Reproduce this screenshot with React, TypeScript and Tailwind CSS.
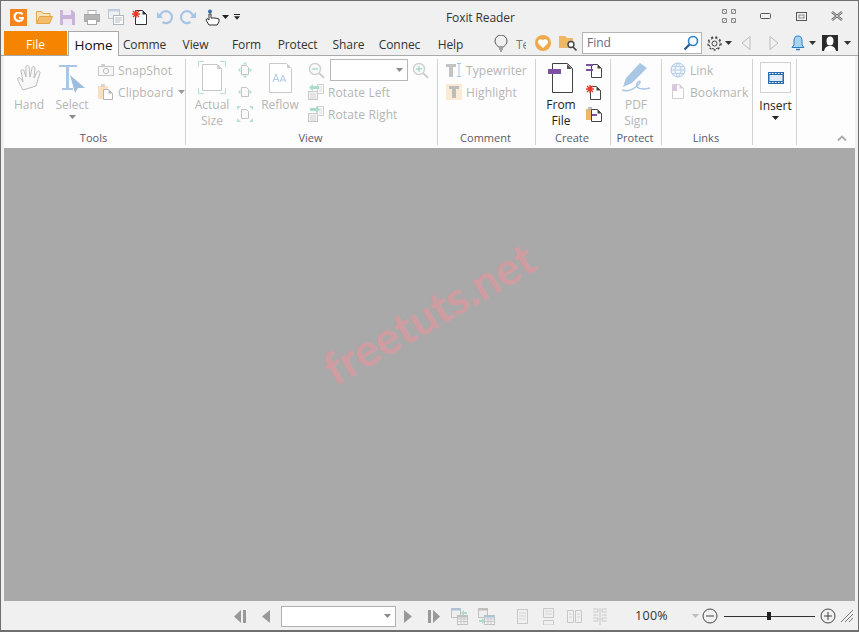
import type { ReactNode } from "react";

const Ic = ({ w = 16, h = 16, children }: { w?: number; h?: number; children: ReactNode }) => (
  <svg width={w} height={h} viewBox={`0 0 ${w} ${h}`} fill="none" className="shrink-0 block">
    {children}
  </svg>
);

const Caret = ({ className = "" }: { className?: string }) => (
  <svg width="7" height="4" viewBox="0 0 7 4" className={`shrink-0 block ${className}`}>
    <path d="M0 0h7L3.5 4z" fill="currentColor" />
  </svg>
);

const Page = ({ x = 0, y = 0, w = 11, h = 14, c = "#555" }: { x?: number; y?: number; w?: number; h?: number; c?: string }) => (
  <>
    <path d={`M${x + 0.5} ${y + 0.5}h${w - 5}l4 4v${h - 5}h-${w - 1}z`} stroke={c} fill="#fff" />
    <path d={`M${x + w - 4.5} ${y + 0.5}l4 4h-4z`} fill={c} />
  </>
);

function BigButton({ icon, label, width, caret }: { icon: ReactNode; label: ReactNode; width: number; caret?: boolean }) {
  return (
    <div className="flex flex-col items-center shrink-0" style={{ width }}>
      <div className="h-[37px] shrink-0 flex items-center justify-center">{icon}</div>
      <div className="text-center leading-[16px] mt-[1px] shrink-0">{label}</div>
      {caret && <Caret className="mt-[2px] text-[#8a8a8a]" />}
    </div>
  );
}

function SmallRow({ icon, label, className = "" }: { icon: ReactNode; label?: string; className?: string }) {
  return (
    <div className={`h-[22px] flex items-center ${className}`}>
      <div className="w-[16px] flex justify-center shrink-0">{icon}</div>
      {label && <span className="ml-[4px] pt-[2px] whitespace-nowrap tracking-[0.1px]">{label}</span>}
    </div>
  );
}

function Group({ width, label, children, border = true }: { width: number; label?: string; children: ReactNode; border?: boolean }) {
  return (
    <div
      className={`relative shrink-0 h-[86px] mt-[3px] ${border ? "border-r border-[#d2d2d2]" : ""}`}
      style={{ width }}
    >
      <div className="flex h-[66px] text-[#b5b5b5]">{children}</div>
      {label && <div className="absolute left-0 right-[2px] bottom-0 text-center text-[11px] leading-[14px] text-[#5a5a6a]">{label}</div>}
    </div>
  );
}

const ZoomIcon = ({ plus }: { plus?: boolean }) => (
  <Ic w={17} h={17}>
    <circle cx="7" cy="7" r="5.5" stroke="#cfcfcf" fill="#fafafa" strokeWidth="1.4" />
    <path d="M11 11l5 5" stroke="#cdcdcd" strokeWidth="2" />
    <path d={plus ? "M4 7h6M7 4v6" : "M4 7h6"} stroke="#a8d8c8" strokeWidth="1.4" />
  </Ic>
);

const RotateIcon = ({ flip }: { flip?: boolean }) => (
  <Ic w={16} h={16}>
    <rect x="0.5" y="7.5" width="9" height="8" fill="#f4f4f4" stroke="#c8c8c8" />
    <path d="M2 10h6M2 12h6M2 14h6" stroke="#d4d4d4" />
    <rect x="9.5" y="0.5" width="6" height="9" fill="#fafafa" stroke="#d0d0d0" />
    <path d="M11 3h3M11 5h3M11 7h3" stroke="#dcdcdc" />
    <path d={flip ? "M2 5V2h6V0l4 3.500L8 7V5z" : "M11 2H5V0L1 3.500 5 7V5h6z"} fill="#a9dccb" />
  </Ic>
);

const PageSmall = ({ arrows }: { arrows: "v" | "h" | "d" }) => (
  <Ic w={16} h={16}>
    <path d="M4.500 3.500h5l2 2v7h-7z" stroke="#c4c4c4" fill="#fafafa" />
    {arrows === "v" && <path d="M8 0l2.500 2.500h-5zM8 16l2.500-2.500h-5zM1 8l2.500-2.500v5zM15 8l-2.500-2.500v5z" fill="#b3e0d2" />}
    {arrows === "h" && <path d="M1 8l2.500-2.500v5zM15 8l-2.500-2.500v5z" fill="#b3e0d2" />}
    {arrows === "d" && <path d="M0 0h4L0 4zM16 0v4l-4-4zM0 16v-4l4 4zM16 16h-4l4-4z" fill="#b3e0d2" />}
  </Ic>
);

const NavTri = ({ dir, dbl }: { dir: "l" | "r"; dbl?: boolean }) => (
  <Ic w={14} h={13}>
    {dir === "l" ? (
      <path d={dbl ? "M8 0v13L1 6.500zM10 0h3v13h-3z" : "M11 0v13L3 6.500z"} fill="#999" />
    ) : (
      <path d={dbl ? "M6 0v13l7-6.500zM1 0h3v13H1z" : "M3 0v13l8-6.500z"} fill="#999" />
    )}
  </Ic>
);

const TableIcon = ({ flip }: { flip?: boolean }) => (
  <Ic w={17} h={17}>
    <rect x="0.500" y="0.500" width="9" height="9" fill="#eee" stroke="#c0c0c0" />
    <rect x="0.500" y="0.500" width="9" height="2" fill={flip ? "#c0c0c0" : "#a9c2de"} />
    <rect x="6.500" y="7.500" width="10" height="9" fill="#f4f4f4" stroke="#c0c0c0" />
    <path d="M6.500 11h10M6.500 13.500h10M10 8v9M13 8v9" stroke="#c8c8c8" />
    <rect x="6.500" y="7.500" width="10" height="2" fill={flip ? "#a9c2de" : "#c0c0c0"} />
    <path d={flip ? "M1 12h3v-2l3 3-3 3v-2H1z" : "M16 4h-3V2l-3 3 3 3V6h3z"} fill="#a9dcc6" />
  </Ic>
);

export default function App() {
  const tabs = ["Comme", "View", "Form", "Protect", "Share", "Connec", "Help"];
  return (
    <div className="w-[859px] h-[632px] bg-[#f0f0f0] border border-[#6f6f6f] border-b-2 flex flex-col overflow-hidden text-[12px] text-[#333] font-['Open_Sans','Noto_Sans',sans-serif]">
      {/* title bar */}
      <div className="h-[30px] shrink-0 flex items-center pl-[9px] pt-[2px] relative">
        <div className="w-[17px] h-[17px] bg-[#f5841f] flex items-center justify-center">
          <Ic w={11} h={11}>
            <path d="M9.500 2.500A4.300 4.300 0 1 0 10 6H6" stroke="#fff" strokeWidth="2.200" />
          </Ic>
        </div>
        <div className="ml-[9px]">
          <Ic w={17} h={14}>
            <path d="M0.500 12.500V1.500h5l1.500 2h7v3" stroke="#e3a34b" fill="#fbe3b8" />
            <path d="M0.500 13.500l3-7h13l-3 7z" fill="#f3bd6c" stroke="#e3a34b" />
          </Ic>
        </div>
        <div className="ml-[7px]">
          <Ic w={15} h={15}>
            <path d="M0 0h12l3 3v12H0z" fill="#c9b3d9" />
            <rect x="3" y="0" width="8" height="5" fill="#efe7f5" />
            <rect x="3" y="9" width="9" height="6" fill="#efe7f5" />
          </Ic>
        </div>
        <div className="ml-[9px]">
          <Ic w={16} h={15}>
            <rect x="4" y="0.500" width="8" height="4" fill="#fff" stroke="#b0b0b0" />
            <rect x="0.500" y="4.500" width="15" height="7" fill="#b5b5b5" stroke="#a8a8a8" />
            <rect x="3.500" y="9.500" width="9" height="5" fill="#fff" stroke="#a8a8a8" />
          </Ic>
        </div>
        <div className="ml-[8px]">
          <Ic w={16} h={16}>
            <rect x="0.500" y="0.500" width="11" height="9" fill="#f0f0f0" stroke="#b7c4d2" />
            <rect x="0.500" y="0.500" width="11" height="2" fill="#c3d3e4" />
            <rect x="5.500" y="6.500" width="10" height="9" fill="#fff" stroke="#aeb6bc" />
            <path d="M7 9h7M7 11h7M7 13h5" stroke="#b4bcc2" />
          </Ic>
        </div>
        <div className="ml-[8px]">
          <Ic w={15} h={16}>
            <Page x={3} y={1} w={12} h={15} c="#333" />
            <path d="M4 1v8M0 5h8M1 2l6 6M7 2l-6 6" stroke="#e43a2a" strokeWidth="1.300" />
          </Ic>
        </div>
        <div className="ml-[10px]">
          <Ic w={16} h={16}>
            <path d="M3 8a6 6 0 1 1 2.500 5" stroke="#a8c4e4" strokeWidth="2.200" />
            <path d="M0 3v6h6z" fill="#a8c4e4" />
          </Ic>
        </div>
        <div className="ml-[7px]">
          <Ic w={16} h={16}>
            <path d="M13 8a6 6 0 1 0-2.500 5" stroke="#a8c4e4" strokeWidth="2.200" />
            <path d="M16 3v6h-6z" fill="#a8c4e4" />
          </Ic>
        </div>
        <div className="ml-[9px]">
          <Ic w={15} h={17}>
            <circle cx="5" cy="2.500" r="2" fill="#3a6ea8" />
            <path d="M4 5v6L2 9.500 1 11l3 5h8l2-3v-3l-4-1H6V5z" fill="#fff" stroke="#333" />
          </Ic>
        </div>
        <Caret className="ml-[2px] text-[#222]" />
        <div className="ml-[5px] flex flex-col gap-[1px] items-center text-[#222]">
          <div className="w-[6px] h-[1px] bg-[#222]" />
          <Caret className="w-[6px]" />
        </div>
        <div className="ml-[206px] mt-[1px] text-[12px] tracking-[-0.1px] text-[#333] whitespace-nowrap">Foxit Reader</div>
        <div className="ml-auto -mt-[2px] flex items-center pr-[15px]">
          <Ic w={14} h={14}>
            <path d="M0.500 0.500h4v4h-4zM9.500 0.500h4v4h-4zM0.500 9.500h4v4h-4zM9.500 9.500h4v4h-4z" stroke="#888" />
            <path d="M1 1l3 3M13 1l-3 3M1 13l3-3M13 13l-3-3" stroke="#bbb" />
          </Ic>
          <div className="ml-[24px]">
            <Ic w={11} h={6}>
              <rect x="0.500" y="0.500" width="10" height="5" rx="1" stroke="#555" />
            </Ic>
          </div>
          <div className="ml-[25px]">
            <Ic w={11} h={9}>
              <rect x="0.500" y="0.500" width="10" height="8" stroke="#555" />
              <rect x="3" y="3" width="5" height="3" stroke="#777" strokeWidth="0.800" />
            </Ic>
          </div>
          <div className="ml-[24px]">
            <Ic w={12} h={10}>
              <path d="M1 1l10 8M11 1L1 9" stroke="#666" strokeWidth="2.400" />
              <path d="M1 1l10 8M11 1L1 9" stroke="#eee" strokeWidth="0.800" />
            </Ic>
          </div>
        </div>
      </div>

      {/* tabs row */}
      <div className="h-[25px] shrink-0 flex items-stretch pl-[3px] relative z-10 border-b border-[#a9a9a9]">
        <div className="w-[63px] bg-[#f58400] text-white flex items-center justify-center pt-[3px]">File</div>
        <div className="w-[51px] ml-[1px] -mb-[1px] bg-[#fdfdfd] border border-b-0 border-[#a9a9a9] flex items-center justify-center pt-[3px] text-[13.5px] text-[#111]">Home</div>
        {tabs.map((t) => (
          <div key={t} className="w-[51px] flex items-center justify-center pt-[3px] whitespace-nowrap text-[#333] tracking-[-0.1px]">
            {t}
          </div>
        ))}
        <div className="ml-[18px] flex items-center">
          <Ic w={14} h={17}>
            <path d="M4.500 12C3 10 1 9 1 6a6 6 0 0 1 12 0c0 3-2 4-3.500 6z" stroke="#555" />
            <path d="M5 14h4M6 16h2" stroke="#555" />
          </Ic>
          <div className="ml-[8px] pt-[3px] w-[10px] overflow-hidden whitespace-nowrap text-[#777]">Tell</div>
          <div className="ml-[9px] w-[16px] h-[16px] rounded-full bg-[#eda94b] flex items-center justify-center">
            <Ic w={10} h={9}>
              <path d="M5 9L.5 4.500A2.500 2.500 0 0 1 5 1.500 2.500 2.500 0 0 1 9.500 4.500z" fill="#fff" />
            </Ic>
          </div>
          <div className="ml-[8px]">
            <Ic w={18} h={16}>
              <path d="M0 1h6l2 2h6v10H0z" fill="#eeb766" />
              <circle cx="12" cy="9.500" r="3" fill="#fff" stroke="#444" strokeWidth="1.400" />
              <path d="M14 12l3.500 3.500" stroke="#444" strokeWidth="1.600" />
            </Ic>
          </div>
          <div className="ml-[5px] w-[120px] h-[22px] bg-white border border-[#b4b4b4] flex items-center pl-[4px] pr-[2px] text-[#6a6a7a]">
            <span>Find</span>
            <div className="ml-auto">
              <Ic w={16} h={16}>
                <circle cx="10" cy="6" r="4.500" stroke="#2a7fc4" strokeWidth="1.600" fill="#fff" />
                <path d="M6.500 9.500L1.500 14.500" stroke="#2e5f94" strokeWidth="2.400" />
              </Ic>
            </div>
          </div>
          <div className="ml-[5px]">
            <Ic w={15} h={15}>
              <circle cx="7.500" cy="7.500" r="2.500" stroke="#444" />
              <circle cx="7.500" cy="7.500" r="5.500" stroke="#444" strokeWidth="1" strokeDasharray="2.500 1.800" />
              <circle cx="7.500" cy="7.500" r="6.500" stroke="#444" strokeWidth="1.400" strokeDasharray="2 2.400" />
            </Ic>
          </div>
          <Caret className="ml-[3px] text-[#333]" />
          <div className="ml-[9px]">
            <Ic w={10} h={14}>
              <path d="M9 .5v13L1 7z" stroke="#bdbdbd" fill="#f0f0f0" />
            </Ic>
          </div>
          <div className="ml-[18px]">
            <Ic w={10} h={14}>
              <path d="M1 .5v13L9 7z" stroke="#bdbdbd" fill="#f0f0f0" />
            </Ic>
          </div>
          <div className="ml-[12px]">
            <Ic w={14} h={16}>
              <path d="M7 1C4 1 3 3 3 6v4l-2 2.500h12L11 10V6c0-3-1-5-4-5z" fill="#a8d4f4" stroke="#2a7fc4" />
              <path d="M5 14.500h4" stroke="#2a7fc4" strokeWidth="1.500" />
            </Ic>
          </div>
          <Caret className="ml-[4px] text-[#333]" />
          <div className="ml-[6px] w-[16px] h-[16px] bg-[#2b2b2b] overflow-hidden flex justify-center">
            <Ic w={16} h={16}>
              <ellipse cx="8" cy="6" rx="3.500" ry="4.500" fill="#fff" />
              <path d="M2 16c1-4 3-5 6-5s5 1 6 5z" fill="#fff" />
            </Ic>
          </div>
          <Caret className="ml-[6px] text-[#333]" />
        </div>
      </div>

      {/* ribbon */}
      <div className="h-[92px] shrink-0 mx-[3px] bg-[#fdfdfd] flex relative">
        <Group width={182} label="Tools">
          <div className="ml-[2px] flex">
            <BigButton
              width={46}
              label="Hand"
              icon={
                <Ic w={27} h={28}>
                  <path d="M7 26C5 22 1 16 2 14s4 2 5 4L5 7c0-2 3-2 3 0l2 6 0-10c0-2 3-2 3 0l1 10 2-9c0-2 3-2 3 0l-1 10 3-6c1-2 3-1 3 1-1 4-3 9-4 13z" fill="#f8f8f8" stroke="#bbb" />
                </Ic>
              }
            />
            <BigButton
              width={40}
              label="Select"
              caret
              icon={
                <Ic w={30} h={30}>
                  <path d="M2 2h18v2h-8v21h4v2H5v-2h4V4H2z" fill="#a9c6e4" />
                  <path d="M13 12l15 13-7 0-3 5z" fill="#9cbde0" />
                </Ic>
              }
            />
          </div>
          <div className="ml-[6px] flex flex-col">
            <SmallRow
              label="SnapShot"
              icon={
                <Ic w={16} h={12}>
                  <rect x="0.500" y="2.500" width="15" height="9" fill="#f8f8f8" stroke="#c6c6c6" />
                  <circle cx="8" cy="7" r="2.700" stroke="#c0c0c0" />
                  <rect x="3" y="0" width="4" height="2" fill="#cfcfcf" />
                </Ic>
              }
            />
            <div className="flex items-center">
              <SmallRow
                label="Clipboard"
                icon={
                  <Ic w={16} h={16}>
                    <rect x="0" y="2" width="10" height="13" fill="#fadfc0" />
                    <rect x="3" y="0" width="4" height="3" fill="#d4d4d4" />
                    <Page x={5} y={5} w={10} h={11} c="#b5b5b5" />
                  </Ic>
                }
              />
              <Caret className="ml-[5px] text-[#9a9a9a]" />
            </div>
          </div>
        </Group>
        <Group width={252} label="View">
          <div className="ml-[4px] flex">
            <BigButton
              width={44}
              label={<>Actual<br />Size</>}
              icon={
                <Ic w={28} h={33}>
                  <path d="M0.500 6V0.500H6M22 .500h5.500V6M0.500 27v5.500H6M22 32.500h5.500V27" stroke="#b4e0d2" />
                  <path d="M4.500 3.500h15l4 4v22h-19z" fill="#fff" stroke="#c6c6c6" />
                  <path d="M19 3l5 5h-5z" fill="#d0d0d0" />
                </Ic>
              }
            />
            <div className="flex flex-col ml-[3px]">
              <SmallRow icon={<PageSmall arrows="v" />} />
              <SmallRow icon={<PageSmall arrows="h" />} />
              <SmallRow icon={<PageSmall arrows="d" />} />
            </div>
            <div className="ml-[8px]">
              <BigButton
                width={38}
                label="Reflow"
                icon={
                  <Ic w={23} h={30}>
                    <path d="M0.500 0.500h17l5 5v24h-22z" fill="#fff" stroke="#c9c9c9" />
                    <path d="M18 1l4 4h-4z" fill="#cfcfcf" />
                    <path d="M4 19l3-8 3 8M5 16.500h4M11 19l3-7 3 7M12 17h4" stroke="#a8c8e8" />
                  </Ic>
                }
              />
            </div>
          </div>
          <div className="ml-[9px] flex flex-col">
            <div className="h-[22px] flex items-center">
              <div className="w-[17px] flex justify-center"><ZoomIcon /></div>
              <div className="ml-[5px] w-[78px] h-[22px] bg-white border border-[#b8b8b8] flex items-center justify-end pr-[4px]">
                <Caret className="text-[#8a8a8a]" />
              </div>
              <div className="ml-[4px]"><ZoomIcon plus /></div>
            </div>
            <SmallRow label="Rotate Left" icon={<RotateIcon />} />
            <SmallRow label="Rotate Right" icon={<RotateIcon flip />} />
          </div>
        </Group>
        <Group width={98} label="Comment">
          <div className="ml-[8px] flex flex-col">
            <SmallRow
              label="Typewriter"
              icon={
                <Ic w={16} h={14}>
                  <path d="M0 1h10v3H7v10H3V4H0z" fill="#c4c4c4" />
                  <path d="M13 0v14M11 .5h4M11 13.500h4" stroke="#a9c6e4" />
                </Ic>
              }
            />
            <SmallRow
              label="Highlight"
              icon={
                <div className="w-[16px] h-[16px] bg-[#fbebd4] flex items-center justify-center">
                  <Ic w={10} h={12}>
                    <path d="M0 0h10v3H7v9H3V3H0z" fill="#bdbdbd" />
                  </Ic>
                </div>
              }
            />
          </div>
        </Group>
        <Group width={75} label="Create">
          <div className="ml-[7px] flex">
            <div className="text-[#222]">
              <BigButton
                width={36}
                label={<>From<br />File</>}
                icon={
                  <Ic w={26} h={30}>
                    <path d="M4.500 .500h15l5 5v24h-20z" fill="#fff" stroke="#444" />
                    <path d="M19 1l5 5h-5z" fill="#555" />
                    <rect x="0" y="6" width="13" height="5" fill="#7d4fa5" />
                  </Ic>
                }
              />
            </div>
            <div className="ml-[7px] flex flex-col">
              <SmallRow
                icon={
                  <Ic w={16} h={16}>
                    <Page x={5} y={2} w={11} h={14} c="#444" />
                    <path d="M0 2h7v2H0zM0 7h7v2H0z" fill="#7d4fa5" />
                  </Ic>
                }
              />
              <SmallRow
                icon={
                  <Ic w={16} h={16}>
                    <Page x={4} y={2} w={11} h={14} c="#444" />
                    <path d="M4 1v8M0 5h8M1 2l6 6M7 2l-6 6" stroke="#e43a2a" strokeWidth="1.300" />
                  </Ic>
                }
              />
              <SmallRow
                icon={
                  <Ic w={16} h={16}>
                    <rect x="0" y="3" width="8" height="11" fill="#eeb766" />
                    <rect x="2" y="1" width="4" height="3" fill="#bbb" />
                    <Page x={5} y={3} w={11} h={13} c="#444" />
                    <rect x="6" y="8" width="5" height="2" fill="#7d4fa5" />
                  </Ic>
                }
              />
            </div>
          </div>
        </Group>
        <Group width={51} label="Protect">
          <div className="w-full">
            <BigButton
              width={50}
              label={<>PDF<br />Sign</>}
              icon={
                <Ic w={32} h={32}>
                  <path d="M20 1l7 5-15 15-9 4 3-9z" fill="#a9c6e4" />
                  <path d="M2 28c5 2 10 0 15-4 4-3 4-6 1-4-4 4 0 9 12 6" stroke="#a9c6e4" strokeWidth="1.500" />
                </Ic>
              }
            />
          </div>
        </Group>
        <Group width={91} label="Links">
          <div className="ml-[8px] flex flex-col">
            <SmallRow
              label="Link"
              icon={
                <Ic w={16} h={16}>
                  <circle cx="8" cy="8" r="7" fill="#eef4fa" stroke="#a9c6e4" />
                  <path d="M1 8h14M8 1c-4 4-4 10 0 14M8 1c4 4 4 10 0 14M2 4.500h12M2 11.500h12" stroke="#b8d0e8" />
                </Ic>
              }
            />
            <SmallRow
              label="Bookmark"
              icon={
                <Ic w={13} h={16}>
                  <Page w={12} h={15} c="#d0d0d0" />
                  <rect x="1" y="1" width="4" height="6" fill="#d8c4e8" />
                </Ic>
              }
            />
          </div>
        </Group>
        <Group width={44}>
          <div className="ml-[7px] flex flex-col items-center text-[#222] w-[31px]">
            <div className="mt-[3px] w-[31px] h-[31px] shrink-0 border border-[#d2d2d2] flex items-center justify-center">
              <Ic w={16} h={12}>
                <rect x="0" y="0" width="16" height="12" fill="#2a6cb0" />
                <rect x="1.500" y="3" width="13" height="6" fill="#dfeaf6" />
                <path d="M1 1.500h14M1 10.500h14" stroke="#fff" strokeDasharray="1.500 1.500" />
              </Ic>
            </div>
            <div className="mt-[5px] leading-[16px] text-center">Insert</div>
            <Caret className="mt-[2px]" />
          </div>
        </Group>
        <div className="absolute right-[8px] bottom-[7px]">
          <Ic w={10} h={6}>
            <path d="M1 5.500l4-4 4 4" stroke="#a9a9a9" strokeWidth="1.800" />
          </Ic>
        </div>
      </div>

      {/* document area */}
      <div className="flex-1 mx-[3px] bg-[#a9a9a9] relative overflow-hidden">
        <div className="absolute left-[307px] top-[143px] -rotate-[30deg] text-[45px] leading-none font-bold text-[#cf9da1] font-['Lato',sans-serif] whitespace-nowrap">
          freetuts.net
        </div>
      </div>

      {/* status bar */}
      <div className="h-[29px] shrink-0 flex items-center pl-[232px] pt-[1px] relative">
        <NavTri dir="l" dbl />
        <div className="ml-[12px]"><NavTri dir="l" /></div>
        <div className="ml-[8px] w-[115px] h-[21px] bg-white border border-[#b0b0b0] flex items-center justify-end pr-[4px]">
          <Caret className="text-[#8a8a8a]" />
        </div>
        <div className="ml-[5px]"><NavTri dir="r" /></div>
        <div className="ml-[12px]"><NavTri dir="r" dbl /></div>
        <div className="ml-[10px]"><TableIcon /></div>
        <div className="ml-[10px]"><TableIcon flip /></div>
        <div className="ml-[22px]">
          <Ic w={11} h={15}>
            <rect x="0.500" y="0.500" width="10" height="14" stroke="#c8c8c8" />
            <path d="M2 4h7M2 7h7M2 10h7" stroke="#d4d4d4" />
          </Ic>
        </div>
        <div className="ml-[14px]">
          <Ic w={13} h={17}>
            <path d="M1.500 .500h10v9h-10zM1.500 12.500h10V17h-10z" stroke="#c8c8c8" />
            <path d="M3 3h7M3 6h7" stroke="#d4d4d4" />
          </Ic>
        </div>
        <div className="ml-[12px]">
          <Ic w={15} h={13}>
            <path d="M.5 .5h6v12h-6zM8.500 .5h6v12h-6z" stroke="#c8c8c8" />
            <path d="M2 4h3M2 7h3M10 4h3M10 7h3" stroke="#d4d4d4" />
          </Ic>
        </div>
        <div className="ml-[10px]">
          <Ic w={16} h={17}>
            <path d="M1 1h5v3H1M1 7h5M15 1h-5v3h5M15 7h-5M1 10h5v3H1M15 10h-5v3h5M8 0v17" stroke="#c8c8c8" />
          </Ic>
        </div>
        <div className="ml-[27px] text-[#333] text-[12.500px] tracking-[0.3px]">100%</div>
        <Caret className="ml-[24px] text-[#bdbdbd]" />
        <div className="ml-[3px]">
          <Ic w={16} h={16}>
            <circle cx="8" cy="8" r="7" stroke="#444" />
            <path d="M4 8h8" stroke="#444" />
          </Ic>
        </div>
        <div className="ml-[6px] w-[91px] h-[1px] bg-[#333] relative">
          <div className="absolute left-[43px] -top-[4px] w-[4px] h-[8px] bg-[#222]" />
        </div>
        <div className="ml-[5px]">
          <Ic w={16} h={16}>
            <circle cx="8" cy="8" r="7" stroke="#444" />
            <path d="M4 8h8M8 4v8" stroke="#444" />
          </Ic>
        </div>
        <div className="ml-[5px]">
          <Ic w={12} h={12}>
            <path d="M0 12L12 0M4 12l8-8M8 12l4-4" stroke="#777" />
          </Ic>
        </div>
      </div>
    </div>
  );
}
